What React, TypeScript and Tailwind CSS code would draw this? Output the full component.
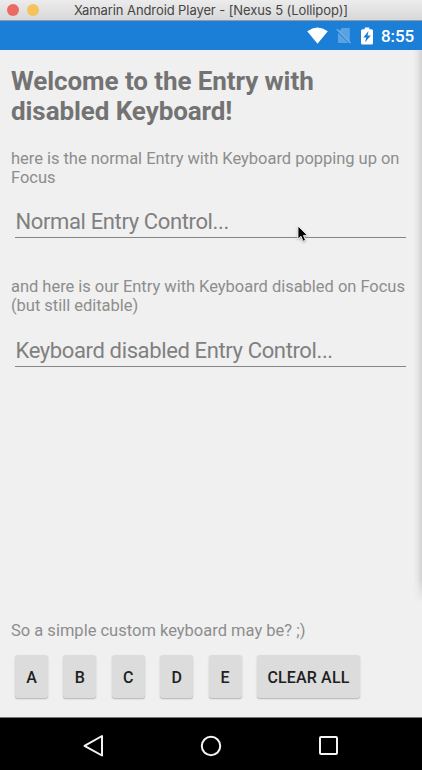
import React from "react";

const keys = ["A", "B", "C", "D", "E"];

function TitleBar() {
  return (
    <header className="relative flex h-[21px] items-center justify-center bg-linear-to-b from-[#ececec] to-[#d8d8d8] border-b border-[#8f9aa6]">
      <div className="absolute left-[7px] top-[4px] flex gap-[8px]">
        <span className="size-3 rounded-full bg-[#ec6a62]" />
        <span className="size-3 rounded-full bg-[#f4c35b]" />
      </div>
      <span className="whitespace-nowrap font-[Inter] text-[13px] leading-5 tracking-[-0.09px] text-[#454545]">
        Xamarin Android Player - [Nexus 5 (Lollipop)]
      </span>
    </header>
  );
}

function StatusBar() {
  return (
    <div className="flex h-[29px] items-center bg-[#1b7fd8] pl-[307px] text-white">
      <svg className="h-[17px] w-[21px] shrink-0" viewBox="0 0 21 17" fill="currentColor">
        <path d="M0.2 4.2Q10.5 -3 20.8 4.2L10.5 16.8Z" />
      </svg>
      <svg className="ml-[8px] h-[17px] w-[15px] shrink-0" viewBox="0 0 15 17">
        <path d="M6 1H12.5Q13.8 1 13.8 2.3V15L3 4Z" fill="#5aa2e2" />
        <path d="M2 5.5L12.5 16H3.2Q2 16 2 14.8Z" fill="#5aa2e2" />
        <path d="M0.8 2.2L14.5 16" stroke="#7db4ea" strokeWidth="1.2" />
      </svg>
      <svg className="ml-[10px] h-[18px] w-[12px] shrink-0" viewBox="0 0 12 18">
        <path d="M3.7 0.5H8.3V2.3H10.5Q12 2.3 12 3.8V16Q12 17.5 10.5 17.5H1.5Q0 17.5 0 16V3.8Q0 2.3 1.5 2.3H3.7Z" fill="white" />
        <path d="M7.5 4L2.3 10.4H5.2L4.1 15.2L9.8 8.5H6.6Z" fill="#1b7fd8" />
      </svg>
      <span className="ml-[8px] pt-px text-[17px] font-medium leading-5 tracking-[-0.1px]">8:55</span>
    </div>
  );
}

function Entry({ text }: { text: string }) {
  return (
    <div className="ml-[4px] mr-[5px] h-[30px] border-b border-[#858585] pl-[0.5px] pt-px text-[22px] leading-[26px] tracking-[-0.37px] text-[#808080]">
      <span className="whitespace-nowrap">{text}</span>
    </div>
  );
}

function Key({ label, wide }: { label: string; wide?: boolean }) {
  return (
    <button
      className={`h-[43px] whitespace-nowrap rounded-[3px] bg-[#dcdcdc] pt-[3px] text-[16px] font-medium text-[#202020] shadow-[0_1px_1px_#bdbdbd,0_1px_2px_#d0d0d0] ${wide ? "w-[103px] tracking-[0.15px]" : "w-[33px]"}`}
    >
      {label}
    </button>
  );
}

export default function App() {
  return (
    <div className="flex h-[770px] w-[422px] flex-col overflow-hidden bg-[#f0f0f0] font-['Roboto',sans-serif]">
      <TitleBar />
      <StatusBar />
      <main className="relative flex h-[667px] flex-col pl-[11px] pr-[11px] text-[16.5px] leading-[19.4px] tracking-[-0.03px] text-[#8d8d8d]">
        <h1 className="mt-[16px] whitespace-nowrap text-[26px] font-bold leading-[30px] tracking-[-0.08px] text-[#737373]">
          Welcome to the Entry with
          <br />
          disabled Keyboard!
        </h1>
        <p className="mt-[22.6px] whitespace-nowrap">
          here is the normal Entry with Keyboard popping up on
          <br />
          Focus
        </p>
        <div className="mt-[20.4px]">
          <Entry text="Normal Entry Control..." />
        </div>
        <p className="mt-[39px] whitespace-nowrap">
          and here is our Entry with Keyboard disabled on Focus
          <br />
          (but still editable)
        </p>
        <div className="mt-[21px]">
          <Entry text="Keyboard disabled Entry Control..." />
        </div>
        <p className="mt-auto tracking-normal">So a simple custom keyboard may be? ;)</p>
        <div className="mb-[19px] ml-[4px] mt-[15px] flex gap-[15.4px]">
          {keys.map((key) => (
            <Key key={key} label={key} />
          ))}
          <Key label="CLEAR ALL" wide />
        </div>
        <div className="pointer-events-none absolute right-0 top-0 h-[552px] w-[9px] bg-linear-to-l from-[#d2d2d2] via-[#e6e6e6] to-[#f0f0f0] [mask-image:linear-gradient(to_bottom,black_96%,transparent)]" />
        <svg className="absolute left-[297px] top-[175px] h-[18px] w-[12px] drop-shadow-[0_1px_1px_#aaa]" viewBox="0 0 12 18">
          <path d="M1 1V14L4 11.3L6.1 16.2L8.5 15.2L6.4 10.4H10.5Z" fill="black" stroke="white" strokeWidth="0.8" />
        </svg>
      </main>
      <nav className="flex h-[53px] items-center border-t border-[#777] bg-black pl-[83px]">
        <svg className="mt-[3px] h-[24px] w-[21px]" viewBox="0 0 21 24" fill="none" stroke="#f4f4f4" strokeWidth="2">
          <path d="M1.5 11.8L19 2V21.5Z" strokeLinejoin="round" />
        </svg>
        <svg className="ml-[96px] mt-[3px] size-[22px]" viewBox="0 0 22 22" fill="none" stroke="#f4f4f4" strokeWidth="2">
          <circle cx="11" cy="11" r="9.2" />
        </svg>
        <svg className="ml-[97px] mt-[3px] size-[19px]" viewBox="0 0 19 19" fill="none" stroke="#f4f4f4" strokeWidth="2">
          <rect x="1" y="1" width="17" height="17" rx="1" />
        </svg>
      </nav>
    </div>
  );
}
